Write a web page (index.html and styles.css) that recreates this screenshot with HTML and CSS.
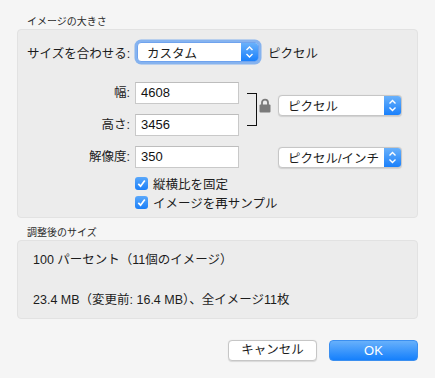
FILE: index.html
```html
<!DOCTYPE html>
<html lang="ja">
<head>
<meta charset="utf-8">
<link rel="stylesheet" href="styles.css">
</head>
<body>
<div class="dialog">
  <div class="section-title first">イメージの大きさ</div>
  <div class="group group-size">
    <div class="fit-row">
      <span class="fit-label">サイズを合わせる:</span>
      <div class="popup popup-focus">
        <span class="popup-text">カスタム</span>
        <span class="stepper">
          <svg width="17" height="20" viewBox="0 0 17 20"><polyline points="5.5,8 8.5,5 11.5,8" fill="none" stroke="#fff" stroke-width="1.4"/><polyline points="5.5,12 8.5,15 11.5,12" fill="none" stroke="#fff" stroke-width="1.4"/></svg>
        </span>
      </div>
      <span class="fit-unit">ピクセル</span>
    </div>

    <div class="fields">
      <label class="field-label r1">幅:</label>
      <div class="input r1">4608</div>
      <label class="field-label r2">高さ:</label>
      <div class="input r2">3456</div>
      <label class="field-label r3">解像度:</label>
      <div class="input r3">350</div>

      <div class="link">
        <span class="bracket"></span>
        <svg class="lock" width="12" height="15" viewBox="0 0 12 15"><path d="M3 7.5 V4.6 a3 3 0 0 1 6 0 V7.5" fill="none" stroke="#7a7a7a" stroke-width="1.8"/><rect x="0.5" y="6.5" width="11" height="8" rx="1" fill="#7a7a7a"/></svg>
      </div>

      <div class="popup popup-unit">
        <span class="popup-text">ピクセル</span>
        <span class="stepper">
          <svg width="17" height="21" viewBox="0 0 17 21"><polyline points="5.5,8.5 8.5,5.5 11.5,8.5" fill="none" stroke="#fff" stroke-width="1.4"/><polyline points="5.5,12.5 8.5,15.5 11.5,12.5" fill="none" stroke="#fff" stroke-width="1.4"/></svg>
        </span>
      </div>
      <div class="popup popup-res">
        <span class="popup-text">ピクセル/インチ</span>
        <span class="stepper">
          <svg width="17" height="21" viewBox="0 0 17 21"><polyline points="5.5,8.5 8.5,5.5 11.5,8.5" fill="none" stroke="#fff" stroke-width="1.4"/><polyline points="5.5,12.5 8.5,15.5 11.5,12.5" fill="none" stroke="#fff" stroke-width="1.4"/></svg>
        </span>
      </div>
    </div>

    <div class="checks">
      <div class="check-row">
        <span class="checkbox"><svg width="13" height="13" viewBox="0 0 13 13"><path d="M3.3 6.8 L5.6 9.2 L9.8 3.6" fill="none" stroke="#fff" stroke-width="1.7"/></svg></span>
        <span>縦横比を固定</span>
      </div>
      <div class="check-row">
        <span class="checkbox"><svg width="13" height="13" viewBox="0 0 13 13"><path d="M3.3 6.8 L5.6 9.2 L9.8 3.6" fill="none" stroke="#fff" stroke-width="1.7"/></svg></span>
        <span>イメージを再サンプル</span>
      </div>
    </div>
  </div>

  <div class="section-title second">調整後のサイズ</div>
  <div class="group group-result">
    <div class="result-line">100 パーセント（11個のイメージ）</div>
    <div class="result-line second-line">23.4 MB（変更前: 16.4 MB）、全イメージ11枚</div>
  </div>

  <div class="buttons">
    <button class="btn btn-cancel">キャンセル</button>
    <button class="btn btn-ok">OK</button>
  </div>
</div>
</body>
</html>
```

FILE: styles.css
```css
* { box-sizing: border-box; }

html, body {
  margin: 0;
  padding: 0;
  background: #f5f5f5;
}

body {
  font-family: "Liberation Sans", "Noto Sans CJK JP", sans-serif;
  font-size: 12px;
  color: #1c1c1c;
  width: 435px;
  height: 378px;
  overflow: hidden;
}

.dialog {
  padding: 0 17px;
}

.section-title {
  font-size: 10px;
  line-height: 14px;
  color: #2a2a2a;
  padding-left: 10px;
}
.section-title.first { padding-top: 15px; }
.section-title.second { padding-top: 8px; }

.group {
  background: #ececec;
  border: 1px solid #e2e2e2;
  border-radius: 4px;
}

.group-size {
  padding: 12px 0 5px 0;
}

.fit-row {
  display: flex;
  align-items: center;
  height: 20px;
}

.fit-label {
  width: 119px;
  padding-left: 9px;
  font-size: 12.5px;
}

.fit-unit {
  margin-left: 9px;
  font-size: 12.5px;
}

.popup {
  display: flex;
  align-items: stretch;
  background: #fff;
  border: 1px solid #c6c6c6;
  border-radius: 4px;
  box-shadow: 0 0.5px 1px rgba(0,0,0,0.12);
  overflow: hidden;
}

.popup-text {
  flex: 1;
  display: flex;
  align-items: center;
  padding-left: 9px;
  font-size: 12.5px;
  white-space: nowrap;
}

.stepper {
  width: 17px;
  flex: none;
  display: flex;
  align-items: center;
  justify-content: center;
  background: linear-gradient(#69b1fb, #1a80fb);
}

.popup-focus {
  width: 122px;
  height: 20px;
  border-color: #6fa3ee;
  box-shadow: 0 0 0 2.5px rgba(100, 160, 240, 0.75);
}

.fields {
  display: grid;
  grid-template-columns: 117px 104px 39px 124px;
  grid-template-rows: 22px 22px 22px;
  row-gap: 10px;
  margin-top: 20px;
}

.r1 { grid-row: 1; }
.r2 { grid-row: 2; }
.r3 { grid-row: 3; }

.field-label {
  grid-column: 1;
  text-align: right;
  padding-right: 5px;
  line-height: 22px;
  font-size: 12.5px;
}

.input {
  grid-column: 2;
  background: #fff;
  border: 1px solid #c9c9c9;
  border-top-color: #bdbdbd;
  padding-left: 5px;
  line-height: 20px;
  font-size: 13px;
  color: #111;
}

.link {
  grid-column: 3;
  grid-row: 1 / 3;
  display: flex;
  align-items: center;
  padding-left: 8px;
}

.bracket {
  width: 10px;
  height: 33px;
  border: 1.5px solid #111;
  border-left: none;
}

.lock {
  margin-left: 2px;
  margin-top: -7px;
}

.popup-unit {
  grid-column: 4;
  grid-row: 1 / 3;
  align-self: start;
  margin-top: 13px;
  height: 21px;
}

.popup-res {
  grid-column: 4;
  grid-row: 3;
  align-self: center;
  height: 21px;
}

.checks {
  margin-top: 6px;
  padding-left: 117px;
}

.check-row {
  display: flex;
  align-items: center;
  height: 19px;
  font-size: 12.5px;
}

.checkbox {
  width: 13px;
  height: 13px;
  border-radius: 3px;
  background: linear-gradient(#5aa8fb, #1b7ff8);
  display: flex;
  margin-right: 5px;
}

.group-result {
  padding: 10px 0 9px 15px;
}

.result-line {
  line-height: 18px;
  font-size: 12.5px;
}

.result-line.second-line {
  margin-top: 22px;
}

.buttons {
  display: flex;
  justify-content: flex-end;
  gap: 12px;
  margin-top: 21px;
}

.btn {
  width: 89px;
  height: 21px;
  border-radius: 4px;
  font-family: "Liberation Sans", "Noto Sans CJK JP", sans-serif;
  font-size: 12.5px;
  padding: 0;
  line-height: 19px;
}

.btn-cancel {
  background: #fff;
  border: 1px solid #c6c6c6;
  color: #1c1c1c;
  box-shadow: 0 0.5px 1px rgba(0,0,0,0.12);
}

.btn-ok {
  background: linear-gradient(#67b0fb, #1580fc);
  border: 1px solid #3b8ff0;
  color: #fff;
  font-size: 13px;
}
```
